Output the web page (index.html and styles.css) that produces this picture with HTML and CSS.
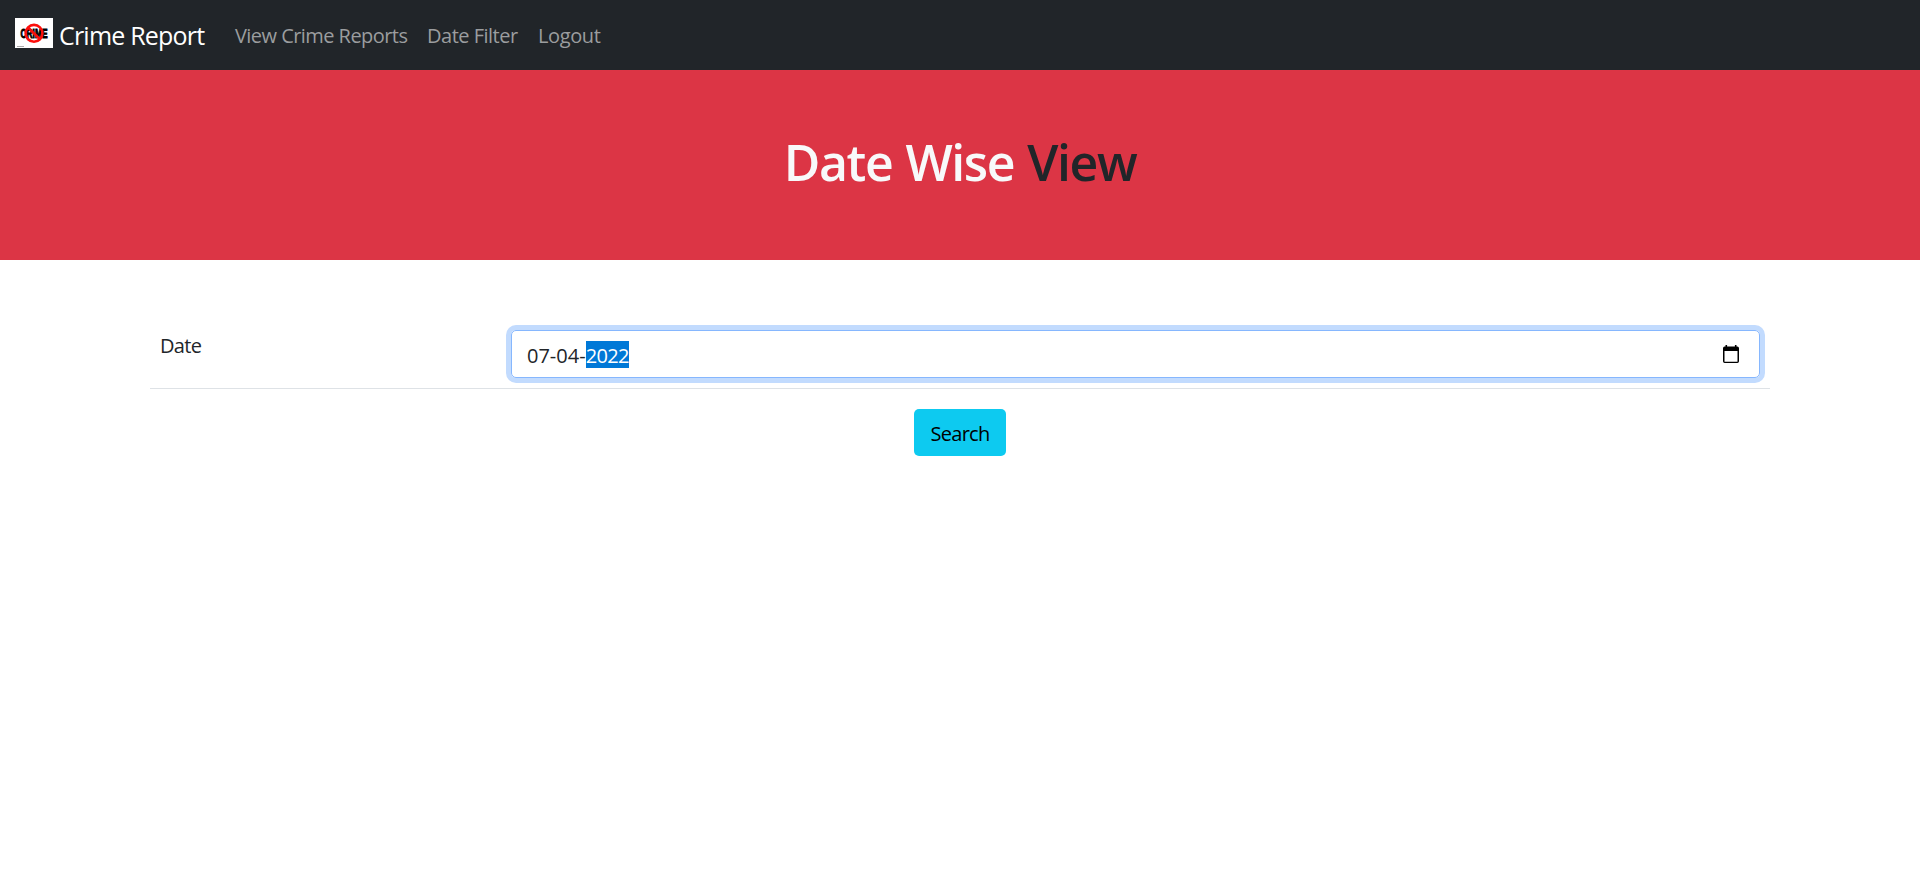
FILE: index.html
```
<!DOCTYPE html>
<html lang="en">
<head>
<meta charset="utf-8">
<title>Crime Report</title>
<link rel="stylesheet" href="styles.css">
</head>
<body>
<nav class="navbar">
  <a class="brand">
    <svg class="logo" viewBox="0 0 38 30" width="38" height="30">
      <rect width="38" height="30" fill="#fff"/>
      <text class="logo-text" x="5.500" y="19.700" textLength="27" lengthAdjust="spacingAndGlyphs">CRIME</text>
      <circle cx="19" cy="15.3" r="8.4" fill="none" stroke="#fb0f0c" stroke-width="2.6"/>
      <path d="M13 9.5 25 21.2" stroke="#fb0f0c" stroke-width="2.6"/>
      <path d="M2 28.5h7" stroke="#aaa" stroke-width="1"/>
    </svg>
    <span class="brand-name">Crime Report</span>
  </a>
  <div class="links">
    <a class="link link-reports">View Crime Reports</a>
    <a class="link link-filter">Date Filter</a>
    <a class="link link-logout">Logout</a>
  </div>
</nav>
<header class="banner">
  <h1 class="title">Date Wise <span class="title-dark">View</span></h1>
</header>
<main class="container">
  <div class="row">
    <label class="label">Date</label>
    <div class="field">
      <span class="value">07-04-<span class="selected">2022</span></span>
      <svg class="calendar" viewBox="0 0 16 18" width="16" height="18">
        <path fill="#000" fill-rule="evenodd" d="M2.5 0h1.6v1.5h7.8V0h1.6v1.5h.8A1.7 1.7 0 0 1 16 3.200V16.300A1.700 1.700 0 0 1 14.300 18H1.700A1.700 1.700 0 0 1 0 16.300V3.200A1.700 1.700 0 0 1 1.700 1.500h.8zM1.500 6v10.700h13V6z"/>
      </svg>
    </div>
  </div>
  <button class="search">Search</button>
</main>
</body>
</html>
```
FILE: styles.css
```
* { box-sizing: border-box; }
body {
  margin: 0;
  background: #fff;
  color: #212529;
  font: 20px/30px "Open Sans", "Noto Sans", sans-serif;
}
.navbar {
  display: flex;
  height: 70px;
  padding: 0 15px;
  background: #212529;
}
.brand {
  display: flex;
  width: 220px;
  padding-top: 18px;
  color: #fff;
  font-size: 25px;
}
.logo { flex: none; overflow: visible; }
.logo-text { font: 900 12.5px "Liberation Sans", sans-serif; fill: #000; stroke: #000; stroke-width: 0.9px; }
.brand-name { margin-left: 6px; padding-top: 2px; letter-spacing: -0.8px; white-space: nowrap; }
.links { display: flex; padding-top: 21px; color: #9b9d9f; white-space: nowrap; }
.link { letter-spacing: -0.55px; }
.link-reports { width: 192px; }
.link-filter { width: 111px; letter-spacing: -0.5px; }
.link-logout { letter-spacing: -0.4px; }
.banner {
  height: 190px;
  padding-top: 62px;
  background: #dc3545;
  text-align: center;
}
.title {
  margin: 0;
  color: #f8f9fa;
  font-size: 50px;
  font-weight: 600;
  line-height: 60px;
  letter-spacing: -1.4px;
  word-spacing: 1.5px;
}
.title-dark { color: #212529; }
.container {
  display: flex;
  flex-direction: column;
  align-items: center;
  width: 1620px;
  margin: 60px auto 0;
}
.row {
  display: grid;
  grid-template-columns: 351px 1249px;
  width: 100%;
  height: 69px;
  padding: 10px;
  border-bottom: 1px solid #dee2e6;
}
.label { line-height: 32px; letter-spacing: -0.7px; }
.field {
  display: flex;
  justify-content: space-between;
  align-items: center;
  height: 48px;
  padding: 0 20px 0 15px;
  border: 1px solid #86b7fe;
  border-radius: 5px;
  box-shadow: 0 0 0 5px #c2dbfe;
}
.value { display: flex; height: 27px; line-height: 29px; letter-spacing: 0; }
.selected { height: 27px; color: #fff; background: #0078d7; letter-spacing: -0.65px; }
.calendar { flex: none; margin-bottom: 1px; }
.search {
  width: 92px;
  height: 47px;
  margin-top: 20px;
  padding: 2px 0 0;
  border: 0;
  border-radius: 5px;
  background: #0dcaf0;
  color: #000;
  font: inherit;
  letter-spacing: -0.7px;
}
```
